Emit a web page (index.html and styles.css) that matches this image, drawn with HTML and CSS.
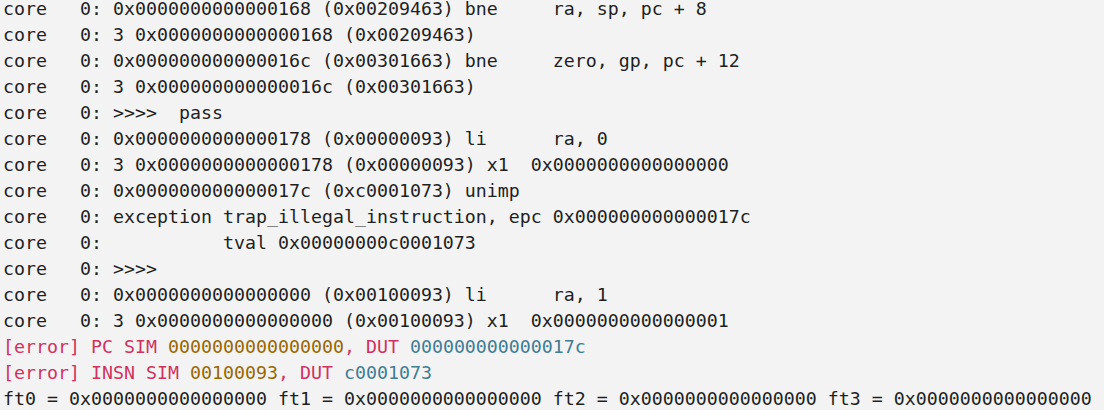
FILE: index.html
```html
<!DOCTYPE html>
<html>
<head>
<meta charset="utf-8">
<link rel="stylesheet" href="styles.css">
</head>
<body>
<pre class="log">core   0: 0x0000000000000168 (0x00209463) bne     ra, sp, pc + 8
core   0: 3 0x0000000000000168 (0x00209463)
core   0: 0x000000000000016c (0x00301663) bne     zero, gp, pc + 12
core   0: 3 0x000000000000016c (0x00301663)
core   0: &gt;&gt;&gt;&gt;  pass
core   0: 0x0000000000000178 (0x00000093) li      ra, 0
core   0: 3 0x0000000000000178 (0x00000093) x1  0x0000000000000000
core   0: 0x000000000000017c (0xc0001073) unimp
core   0: exception trap_illegal_instruction, epc 0x000000000000017c
core   0:           tval 0x00000000c0001073
core   0: &gt;&gt;&gt;&gt;
core   0: 0x0000000000000000 (0x00100093) li      ra, 1
core   0: 3 0x0000000000000000 (0x00100093) x1  0x0000000000000001
<span class="err">[error] PC SIM </span><span class="sim">0000000000000000</span><span class="err">, DUT </span><span class="dut">000000000000017c</span>
<span class="err">[error] INSN SIM </span><span class="sim">00100093</span><span class="err">, DUT </span><span class="dut">c0001073</span>
ft0 = 0x0000000000000000 ft1 = 0x0000000000000000 ft2 = 0x0000000000000000 ft3 = 0x0000000000000000</pre>
</body>
</html>
```
FILE: styles.css
```css
html, body {
  margin: 0;
  padding: 0;
  background: #f3f3f3;
  overflow: hidden;
}
.log {
  margin: -4px 0 0 0;
  padding: 0 0 0 3px;
  font-family: "DejaVu Sans Mono", "Liberation Mono", monospace;
  font-size: 18.27px;
  line-height: 26px;
  color: #1f1f1f;
  white-space: pre;
}
.err { color: #d0325f; }
.sim { color: #976800; }
.dut { color: #3f7d94; }
```
